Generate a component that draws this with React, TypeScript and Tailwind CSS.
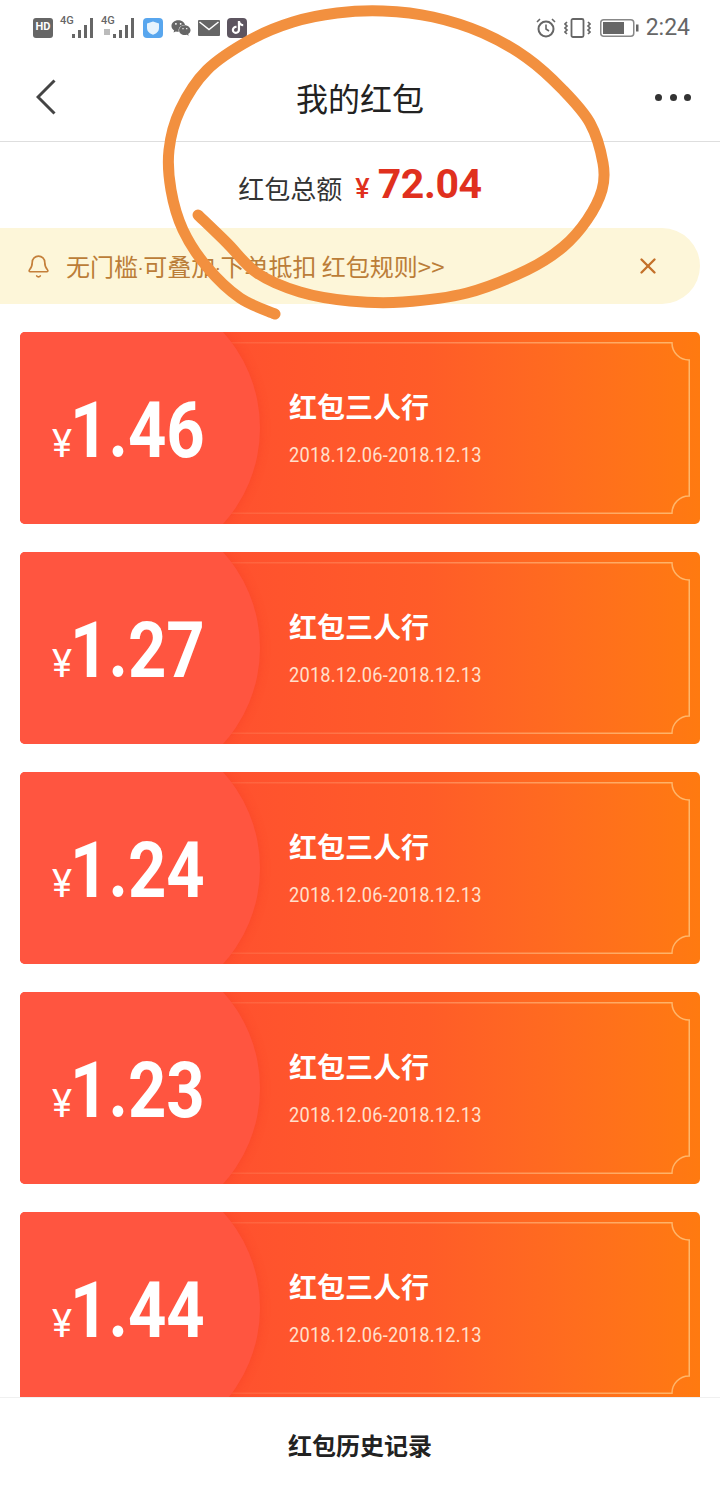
import { FaTiktok, FaWeixin } from "react-icons/fa";
import { Bell, X } from "lucide-react";

const cjk = "font-['Noto_Sans_CJK_SC','Noto_Sans',sans-serif]";
const din = "font-['Roboto','Noto_Sans_CJK_SC',sans-serif]";

const packets = [
  { amount: "1.46" },
  { amount: "1.27" },
  { amount: "1.24" },
  { amount: "1.23" },
  { amount: "1.44" },
];

// centre line of the hand-drawn ring, read off the picture
const ringPoints: [number, number][] = [
  [198, 215], [227, 243], [257, 273], [300, 292], [350, 301], [403, 302], [467, 293], [527, 270],
  [563, 247], [587, 220], [602, 190], [603, 163], [590, 123], [563, 90], [527, 58], [483, 33],
  [433, 17], [383, 11], [337, 13], [293, 22], [250, 40], [207, 70], [180, 110], [169, 150],
  [171, 190], [183, 230], [207, 267], [240, 298], [275, 314],
];

function smoothPath(pts: [number, number][]) {
  let d = `M${pts[0][0]} ${pts[0][1]}`;
  for (let i = 0; i < pts.length - 1; i++) {
    const p0 = pts[Math.max(i - 1, 0)];
    const p1 = pts[i];
    const p2 = pts[i + 1];
    const p3 = pts[Math.min(i + 2, pts.length - 1)];
    const c1x = p1[0] + (p2[0] - p0[0]) / 6;
    const c1y = p1[1] + (p2[1] - p0[1]) / 6;
    const c2x = p2[0] - (p3[0] - p1[0]) / 6;
    const c2y = p2[1] - (p3[1] - p1[1]) / 6;
    d += ` C${c1x} ${c1y} ${c2x} ${c2y} ${p2[0]} ${p2[1]}`;
  }
  return d;
}

function Signal({ sub }: { sub?: boolean }) {
  return (
    <div className="relative h-[22px] w-[34px]">
      <span className={`${din} absolute left-0 top-[-2px] text-[11px] font-medium leading-[12px] text-[#666]`}>4G</span>
      {sub ? <span className="absolute left-[3px] top-[12px] h-[6px] w-[6px] bg-[#bbb]" /> : null}
      <svg width="34" height="22" viewBox="0 0 34 22" className="absolute left-0 top-0" aria-hidden>
        <rect x="12" y="17" width="3" height="4" fill="#666" />
        <rect x="18" y="13" width="3" height="8" fill="#666" />
        <rect x="24" y="8" width="3" height="13" fill="#666" />
        <rect x="30" y="1" width="3" height="20" fill="#666" />
      </svg>
    </div>
  );
}

function StatusBar() {
  return (
    <div className="flex h-[55px] items-center justify-between pl-[33px] pr-[30px]">
      <div className="flex items-center">
        <span className={`${din} mr-[7px] flex h-[20px] w-[20px] items-center justify-center rounded-[3px] bg-[#666] text-[11px] font-bold text-white`}>HD</span>
        <Signal />
        <div className="w-[7px]" />
        <Signal sub />
        <svg width="20" height="20" viewBox="0 0 20 20" className="ml-[8px]" aria-hidden>
          <rect width="20" height="20" rx="4" fill="#58a6ee" />
          <path d="M10 3.5 L16 5.5 V10 C16 13.5 13 15.8 10 16.8 C7 15.8 4 13.5 4 10 V5.5 Z" fill="#e6f3fd" />
        </svg>
        <FaWeixin className="ml-[8px] text-[20px] text-[#666]" />
        <svg width="22" height="16" viewBox="0 0 22 16" className="ml-[7px]" aria-hidden>
          <rect width="22" height="16" rx="1" fill="#666" />
          <path d="M1.5 2 L11 9.5 L20.5 2" fill="none" stroke="#fff" strokeWidth="1.5" />
        </svg>
        <span className="ml-[7px] flex h-[20px] w-[20px] items-center justify-center rounded-[4px] bg-[#5d5560]">
          <FaTiktok className="text-[13px] text-white" />
        </span>
      </div>
      <div className="flex items-center">
        <svg width="20" height="20" viewBox="0 0 20 20" fill="none" stroke="#666" strokeWidth="2" aria-hidden>
          <circle cx="10" cy="11" r="7.5" />
          <path d="M10 6.5 V11 L13 13 M1 4 L4 1 M19 4 L16 1" strokeWidth="1.6" />
        </svg>
        <svg width="27" height="20" viewBox="0 0 27 20" fill="none" stroke="#666" className="ml-[8px]" aria-hidden>
          <rect x="7.5" y="1" width="12" height="18" rx="1.5" strokeWidth="1.8" />
          <path d="M3 4 L1 6 L3 8 L1 10 L3 12 L1 14 L3 16 M24 4 L26 6 L24 8 L26 10 L24 12 L26 14 L24 16" strokeWidth="1.7" />
        </svg>
        <svg width="39" height="18" viewBox="0 0 39 18" fill="none" className="ml-[9px]" aria-hidden>
          <rect x="0.75" y="0.75" width="33" height="16.5" rx="3" stroke="#888" strokeWidth="1.5" />
          <rect x="3" y="3" width="21" height="12" fill="#666" />
          <rect x="36" y="5.5" width="2.5" height="7" fill="#666" />
        </svg>
        <span className={`${din} ml-[7px] text-[23px] leading-none text-[#666]`}>2:24</span>
      </div>
    </div>
  );
}

function NavBar() {
  return (
    <div className="grid h-[87px] grid-cols-3 items-center border-b border-[#dedede] px-[29px] pb-[2px]">
      <svg width="20" height="36" viewBox="0 0 20 36" fill="none" stroke="#444" strokeWidth="3" className="ml-[7px]" aria-hidden>
        <path d="M18.5 1.5 L2 18 L18.5 34.5" />
      </svg>
      <span className={`${cjk} whitespace-nowrap text-center text-[32px] leading-none text-[#222]`}>我的红包</span>
      <div className="flex w-[36px] justify-between justify-self-end">
        <span className="h-[7px] w-[7px] rounded-full bg-[#333]" />
        <span className="h-[7px] w-[7px] rounded-full bg-[#333]" />
        <span className="h-[7px] w-[7px] rounded-full bg-[#333]" />
      </div>
    </div>
  );
}

function Total() {
  return (
    <div className="flex h-[86px] items-center justify-center pt-[6px]">
      <span className={`${cjk} text-[26px] leading-none text-[#333]`}>红包总额</span>
      <span className={`${din} ml-[13px] mt-[3px] text-[27px] font-medium leading-none text-[#e0301e]`}>¥</span>
      <span className={`${din} ml-[8px] mt-[-8px] text-[41px] font-bold leading-none tracking-[-0.4px] text-[#e0301e]`}>72.04</span>
    </div>
  );
}

function Notice() {
  const dot = `${din} text-[20px]`;
  return (
    <div className="flex h-[76px] w-[700px] items-center justify-between rounded-r-[38px] bg-[#fdf6d9] pl-[26px] pr-[39px]">
      <div className="flex items-center">
        <Bell size={25} strokeWidth={1.6} className="text-[#c47f3a]" />
        <span className={`${cjk} ml-[15px] text-[24px] leading-none text-[#bb7d38]`}>
          无门槛<span className={dot}>·</span>可叠加<span className={dot}>·</span>下单抵扣 红包规则&gt;&gt;
        </span>
      </div>
      <X size={26} strokeWidth={2.2} className="text-[#c4702a]" />
    </div>
  );
}

function Frame() {
  return (
    <svg width="500" height="172" viewBox="0 0 500 172" fill="none" className="absolute right-[10px] top-[10px]" aria-hidden>
      <defs>
        <linearGradient id="frame-line" x1="0" x2="1" y1="0" y2="0">
          <stop offset="0" stopColor="#ffb08a" stopOpacity="0.1" />
          <stop offset="0.5" stopColor="#ffb98a" stopOpacity="0.45" />
          <stop offset="1" stopColor="#ffc27a" stopOpacity="0.85" />
        </linearGradient>
      </defs>
      <path
        d="M0 0.75 H482 A17 17 0 0 0 499.25 18 V154 A17 17 0 0 0 482 171.25 H0"
        stroke="url(#frame-line)"
        strokeWidth="1.5"
      />
    </svg>
  );
}

function PacketCard({ amount }: { amount: string }) {
  return (
    <div className="relative flex h-[192px] shrink-0 items-center overflow-hidden rounded-[5px] bg-gradient-to-r from-[#ff4434] via-[#ff5c28] via-60% to-[#ff7a10]">
      <Frame />
      <div className="absolute left-[-46px] top-[-47px] h-[286px] w-[286px] rounded-full bg-[#ff5540] shadow-[1px_0_10px_rgba(240,50,30,0.3)]" />
      <div className="relative flex w-[218px] items-baseline justify-center pt-[6px] text-white">
        <span className={`${din} text-[38px] leading-none`}>¥</span>
        <span className={`${din} ml-[-12px] mr-[-9px] scale-x-[0.87] text-[77px] font-bold leading-none`}>{amount}</span>
      </div>
      <div className="relative ml-[51px] flex flex-col">
        <span className={`${cjk} text-[28px] font-bold leading-none text-white`}>红包三人行</span>
        <span className={`${din} mt-[25px] origin-left scale-x-[0.91] whitespace-nowrap text-[20px] leading-none tracking-[0.25px] text-[#ffe0cc]`}>2018.12.06-2018.12.13</span>
      </div>
    </div>
  );
}

function Ring() {
  return (
    <svg width="720" height="330" viewBox="0 0 720 330" fill="none" className="absolute left-0 top-0" aria-hidden>
      <path d={smoothPath(ringPoints)} stroke="#f2903f" strokeWidth="11" strokeLinecap="round" strokeLinejoin="round" />
    </svg>
  );
}

export default function App() {
  return (
    <div className="relative flex h-[1493px] w-[720px] flex-col overflow-hidden bg-white">
      <StatusBar />
      <NavBar />
      <Total />
      <Notice />
      <div className="flex flex-1 flex-col gap-[28px] overflow-hidden px-[20px] pt-[28px]">
        {packets.map((p) => (
          <PacketCard key={p.amount} amount={p.amount} />
        ))}
      </div>
      <div className="flex h-[96px] items-center justify-center border-t border-[#f0f0f0] bg-white pb-[2px]">
        <span className={`${cjk} text-[24px] font-bold leading-none text-[#222]`}>红包历史记录</span>
      </div>
      <Ring />
    </div>
  );
}
